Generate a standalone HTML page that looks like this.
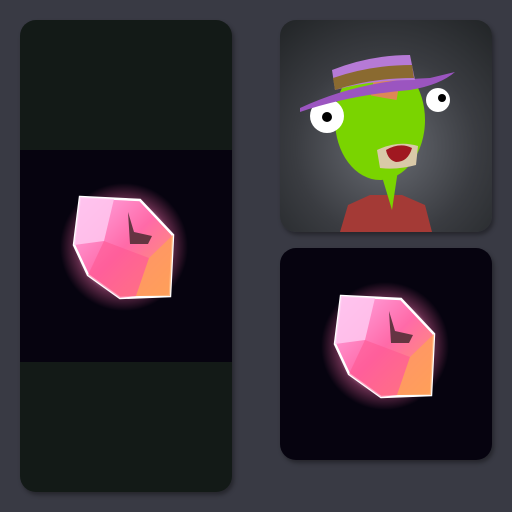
<!DOCTYPE html>
<html><head><style>
body{margin:0;width:512px;height:512px;background:#393a44;position:relative;overflow:hidden}
.c{position:absolute;border-radius:16px;overflow:hidden;box-shadow:2px 3px 4px rgba(0,0,0,.35)}
</style></head><body>
<svg width="0" height="0" style="position:absolute">
<defs>
<linearGradient id="g1" x1="0" y1="0" x2="1" y2="1"><stop offset="0" stop-color="#ffb0ec"/><stop offset=".5" stop-color="#ff6aa8"/><stop offset="1" stop-color="#ffa060"/></linearGradient>
<radialGradient id="gl"><stop offset=".55" stop-color="#ffe0f0" stop-opacity=".9"/><stop offset=".75" stop-color="#ff70b0" stop-opacity=".35"/><stop offset="1" stop-color="#ff60a0" stop-opacity="0"/></radialGradient>
<g id="gem">
<ellipse cx="50" cy="51" rx="64" ry="64" fill="url(#gl)"/>
<polygon points="6,1 66,4 99,39 96,100 46,102 14,79 0,49" fill="url(#g1)" stroke="#fff" stroke-width="2.5"/>
<polygon points="6,1 40,3 30,45 0,49" fill="#ffc8f0" opacity=".85"/>
<polygon points="30,45 75,62 62,100 46,102 14,79" fill="#ff5590" opacity=".55"/>
<polygon points="75,62 99,39 96,100 62,100" fill="#ffa055" opacity=".75"/>
<path d="M54,16 L60,36 L78,40 L74,48 L56,48 Z" fill="#4a2a30" opacity=".85"/>
</g>
</defs></svg>
<div class="c" style="left:20px;top:20px;width:212px;height:472px;background:#131a17">
<div style="position:absolute;left:0;top:130px;width:212px;height:212px;background:#06030f"></div>
<svg style="position:absolute;left:54px;top:176px;overflow:visible" width="100" height="102"><use href="#gem"/></svg>
</div>
<div class="c" style="left:280px;top:20px;width:212px;height:212px;background:radial-gradient(circle at 50% 60%,#6a6d74,#3a3c41 55%,#212426)">
<svg width="212" height="212">
<path d="M60,212 L68,185 L90,175 L122,175 L145,185 L152,212Z" fill="#a43a36"/>
<path d="M100,150 L112,190 L118,150Z" fill="#7ad400"/>
<ellipse cx="100" cy="100" rx="45" ry="60" fill="#7ad400"/>
<circle cx="47" cy="96" r="17" fill="#fff"/><circle cx="47" cy="97" r="5" fill="#000"/>
<circle cx="158" cy="80" r="12" fill="#fff"/><circle cx="162" cy="78" r="4" fill="#000"/>
<rect x="93" y="52" width="26" height="26" fill="#d85" transform="rotate(10 106 65)"/>
<path d="M97,130 Q118,120 138,126 L136,145 Q118,150 100,148Z" fill="#d9c9a8"/>
<path d="M106,130 Q120,122 132,128 Q128,142 116,142 Q108,140 106,130Z" fill="#a01820"/>
<path d="M20,88 Q80,60 150,58 L175,52 Q160,65 130,70 Q70,75 20,92Z" fill="#9b55c0"/>
<path d="M52,50 Q90,35 130,35 L135,60 Q90,60 55,70Z" fill="#b67ad6"/>
<path d="M53,58 Q90,45 132,45 L134,58 Q90,58 55,70Z" fill="#8a6a30"/>
</svg>
</div>
<div class="c" style="left:280px;top:248px;width:212px;height:212px;background:#06030f">
<svg style="position:absolute;left:55px;top:47px;overflow:visible" width="100" height="102"><use href="#gem"/></svg>
</div>
</body></html>
